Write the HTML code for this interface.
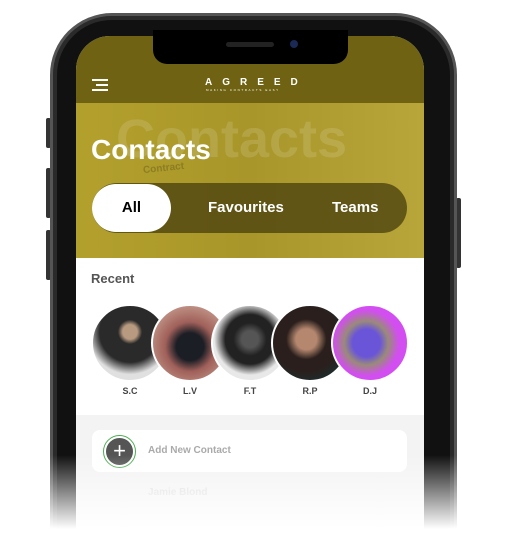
<!DOCTYPE html>
<html><head><style>
*{margin:0;padding:0;box-sizing:border-box}
html,body{width:507px;height:542px;overflow:hidden;background:#fff}
body{font-family:"Liberation Sans",sans-serif}
#wrap{position:relative;width:507px;height:542px;overflow:hidden}
.abs{position:absolute}
.phone{left:50px;top:13px;width:407px;height:529px;border-radius:62px 62px 0 0;background:#111;border:3px solid #555;border-bottom:none;box-shadow:inset 0 0 0 4px #2a2a2a}
.screen{left:76px;top:36px;width:348px;height:506px;border-radius:34px 34px 0 0;overflow:hidden;background:#f3f3f3}
.btn{background:#333;border-radius:2px}
.av{width:78px;height:78px;border-radius:50%;top:304px;border:2px solid #fff}
.lbl{top:386px;font-size:9px;font-weight:bold;color:#444;width:40px;text-align:center}
</style></head><body><div id="wrap">
<div class="abs btn" style="left:46px;top:118px;width:5px;height:30px"></div>
<div class="abs btn" style="left:46px;top:168px;width:5px;height:50px"></div>
<div class="abs btn" style="left:46px;top:230px;width:5px;height:50px"></div>
<div class="abs btn" style="left:456px;top:198px;width:5px;height:70px"></div>
<div class="abs phone"></div>
<div class="abs screen">
 <div class="abs" style="left:0;top:0;width:348px;height:67px;background:#6f6212"></div>
 <div class="abs" style="left:0;top:67px;width:348px;height:155px;background:linear-gradient(90deg,#b3a02c,#a8962a 50%,#b8a63a)"></div>
 <div class="abs" style="left:40px;top:72px;font-size:54px;font-weight:bold;color:rgba(255,255,255,0.13)">Contacts</div>
 <div class="abs" style="left:67px;top:127px;font-size:10px;font-weight:bold;color:rgba(80,70,20,0.35);transform:rotate(-6deg)">Contract</div>
 <div class="abs" style="left:0;top:222px;width:348px;height:157px;background:#fff"></div>
</div>
<div class="abs" style="left:153px;top:30px;width:195px;height:34px;background:#000;border-radius:0 0 14px 14px"></div>
<div class="abs" style="left:226px;top:42px;width:48px;height:5px;background:#222;border-radius:3px"></div>
<div class="abs" style="left:290px;top:40px;width:8px;height:8px;background:#1a2a55;border-radius:50%"></div>
<div class="abs" style="left:92px;top:79px;width:16px;height:2px;background:#fff"></div>
<div class="abs" style="left:96px;top:84px;width:12px;height:2px;background:#fff"></div>
<div class="abs" style="left:92px;top:89px;width:16px;height:2px;background:#fff"></div>
<div class="abs" style="left:205px;top:77px;font-size:10px;font-weight:bold;color:#fff;letter-spacing:10px">AGREED</div>
<div class="abs" style="left:206px;top:88px;font-size:3px;color:#fff;letter-spacing:1.6px">MAKING CONTRACTS EASY</div>
<div class="abs" style="left:91px;top:134px;font-size:28px;font-weight:bold;color:#fff">Contacts</div>
<div class="abs" style="left:92px;top:183px;width:315px;height:50px;border-radius:25px;background:rgba(75,65,15,0.78)"></div>
<div class="abs" style="left:92px;top:184px;width:79px;height:48px;border-radius:24px;background:#fff;text-align:center;line-height:48px;font-weight:bold;font-size:15px;color:#000">All</div>
<div class="abs" style="left:208px;top:199px;font-weight:bold;font-size:15px;color:#fff">Favourites</div>
<div class="abs" style="left:332px;top:199px;font-weight:bold;font-size:15px;color:#fff">Teams</div>
<div class="abs" style="left:91px;top:271px;font-weight:bold;font-size:13px;color:#555">Recent</div>
<div class="abs av" style="left:91px;background:radial-gradient(circle at 50% 35%,#b89a80 0 12%,#2a2a2a 20% 50%,#e0e0e0 70%)"></div>
<div class="abs av" style="left:151px;background:radial-gradient(circle at 50% 55%,#1b1e25 0 25%,#a0605a 45%,#d8b9a8)"></div>
<div class="abs av" style="left:211px;background:radial-gradient(circle at 50% 45%,#555 0 15%,#222 30% 45%,#e8e8e8 65%)"></div>
<div class="abs av" style="left:271px;background:radial-gradient(circle at 45% 45%,#b5876f 0 18%,#2a1f1c 35% 55%,#0f3a40)"></div>
<div class="abs av" style="left:331px;background:radial-gradient(circle at 45% 50%,#6a55d8 0 25%,#9a8a7a 40%,#d24ef0 60%)"></div>
<div class="abs lbl" style="left:110px">S.C</div>
<div class="abs lbl" style="left:170px">L.V</div>
<div class="abs lbl" style="left:230px">F.T</div>
<div class="abs lbl" style="left:290px">R.P</div>
<div class="abs lbl" style="left:350px">D.J</div>
<div class="abs" style="left:92px;top:430px;width:315px;height:42px;background:#fff;border-radius:8px"></div>
<div class="abs" style="left:103px;top:435px;width:33px;height:33px;border-radius:50%;border:1.5px solid #4caf50;padding:2px"><div style="width:100%;height:100%;border-radius:50%;background:#555;color:#fff;text-align:center;line-height:26px;font-size:22px">+</div></div>
<div class="abs" style="left:148px;top:445px;font-size:10px;font-weight:bold;color:#aaa">Add New Contact</div>
<div class="abs" style="left:148px;top:487px;font-size:10px;font-weight:bold;color:#ddd">Jamie Blond</div>
<div class="abs" style="left:0;top:455px;width:507px;height:87px;background:linear-gradient(rgba(255,255,255,0),#fff 85%)"></div>
</div></body></html>
